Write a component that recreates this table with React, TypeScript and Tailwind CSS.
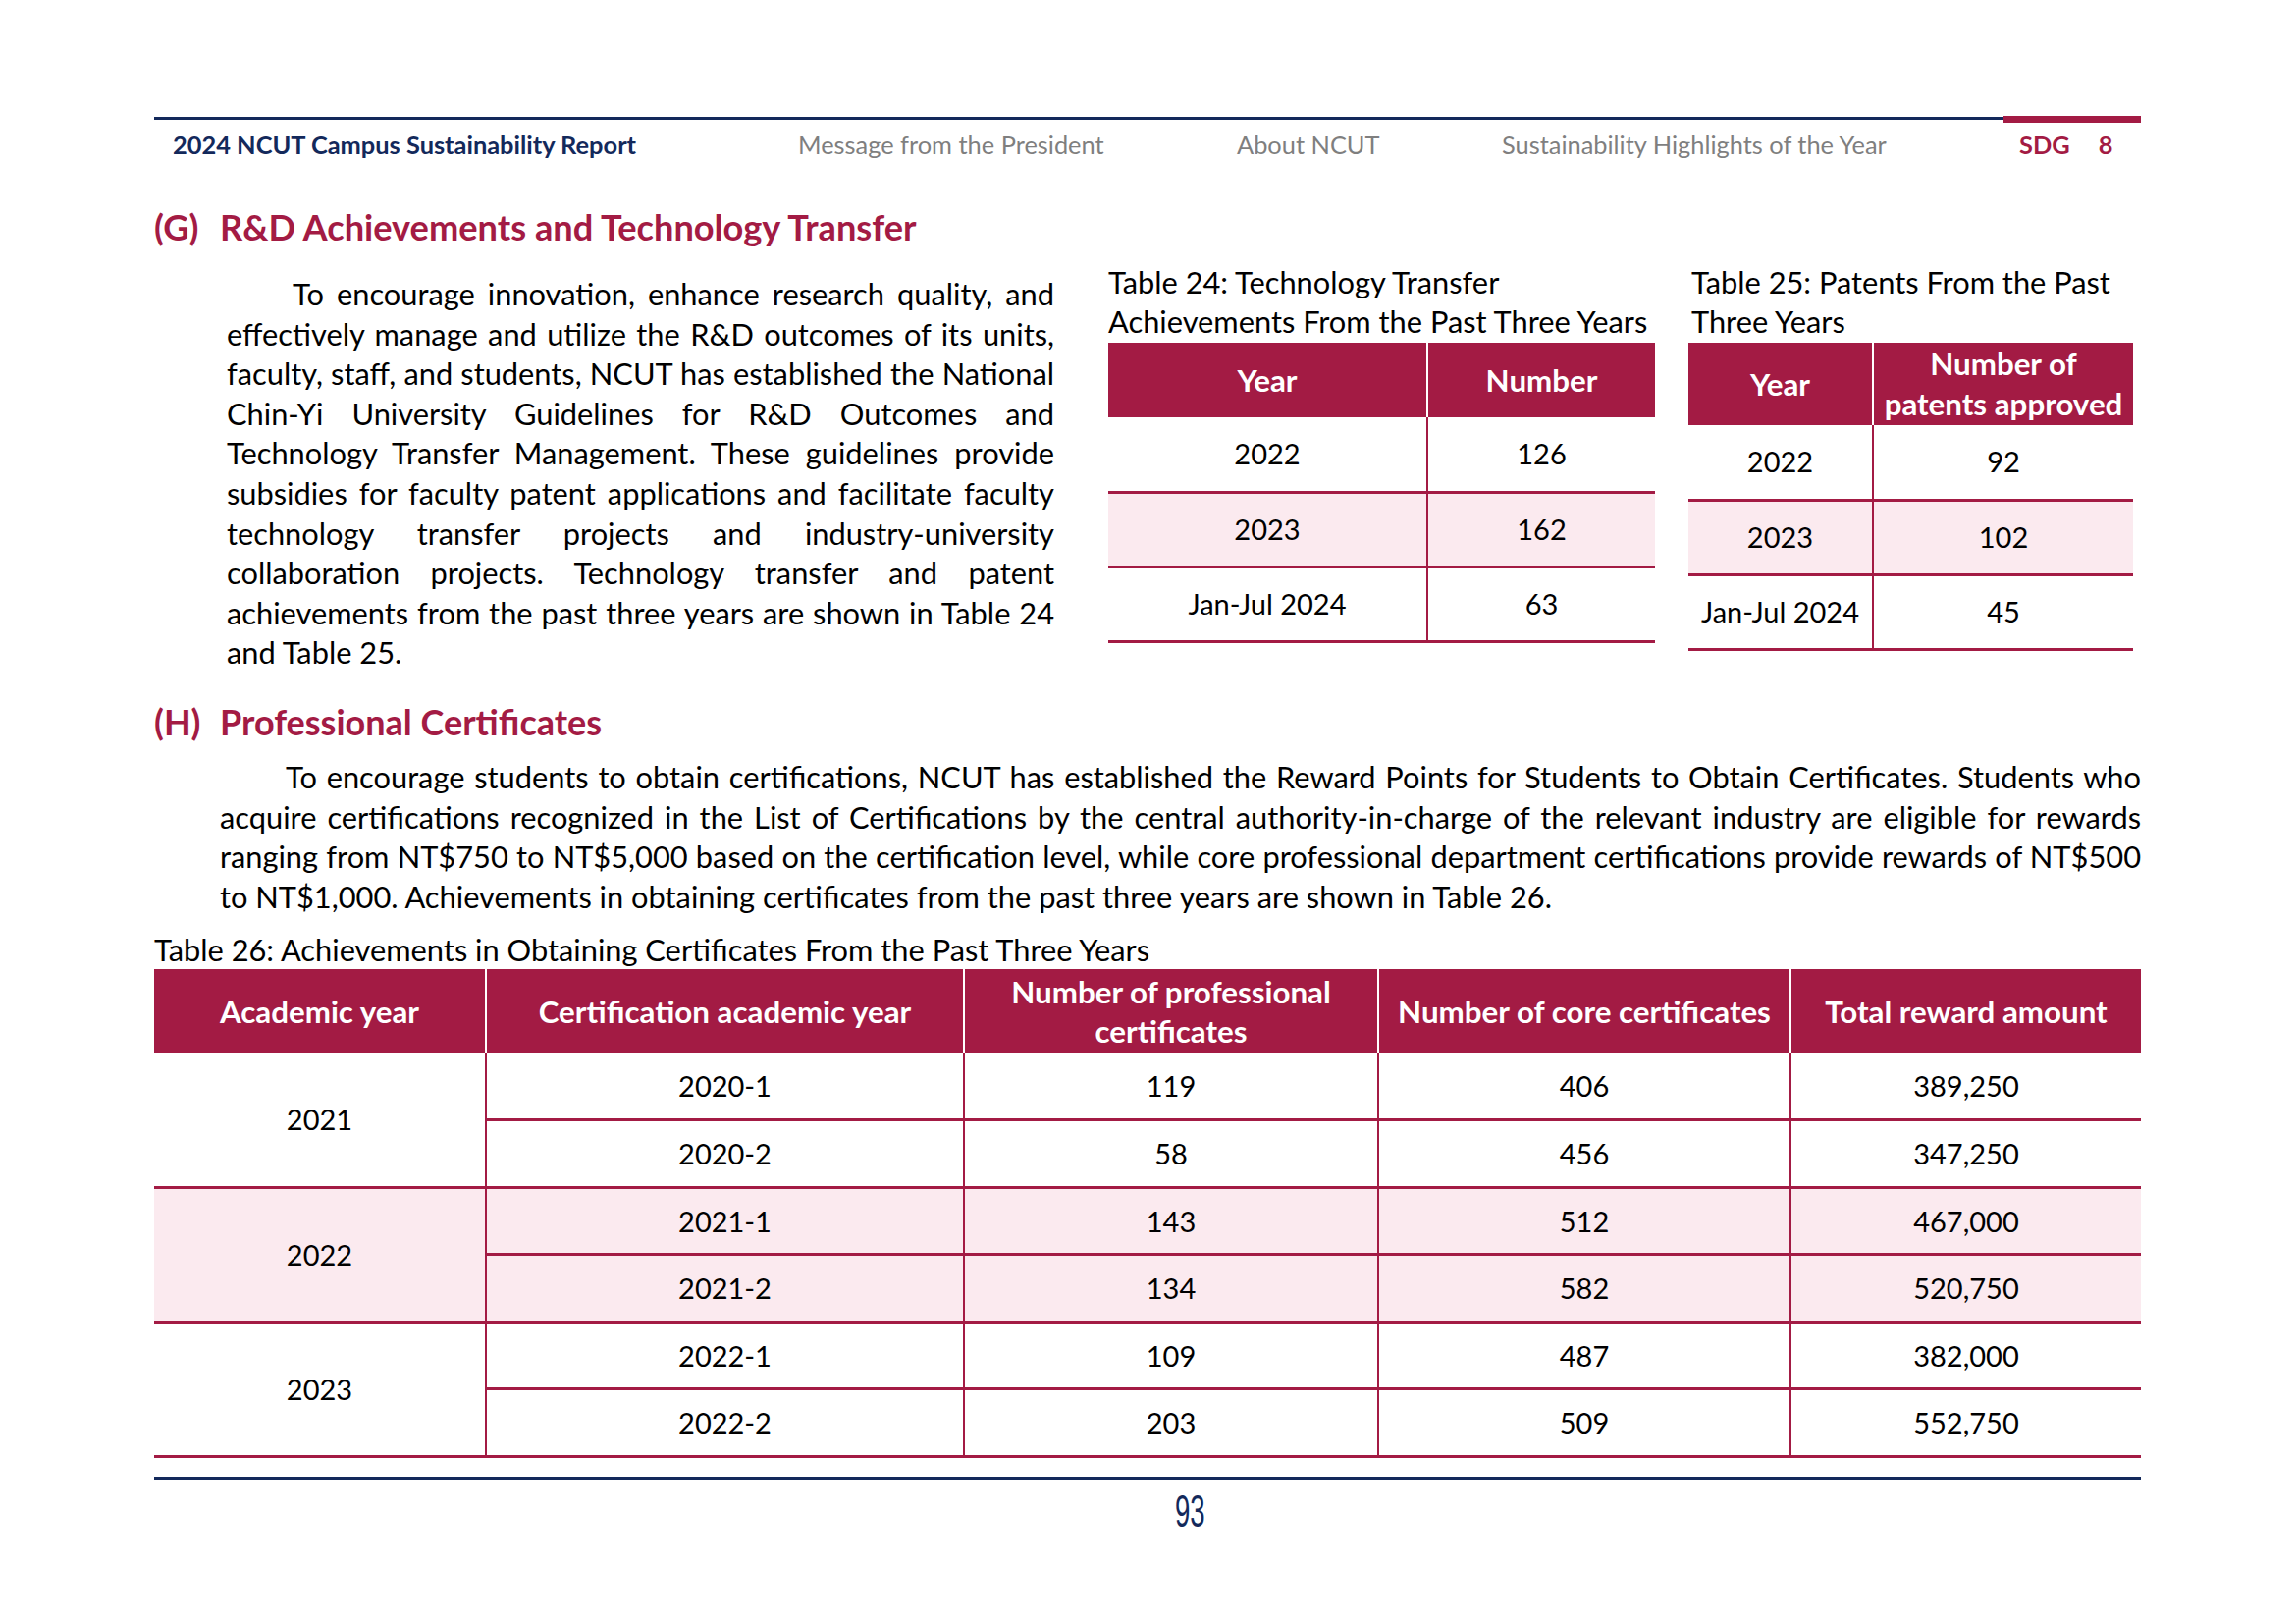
const gParagraph = [
  "To encourage innovation, enhance research quality, and",
  "effectively manage and utilize the R&D outcomes of its units,",
  "faculty, staff, and students, NCUT has established the National",
  "Chin-Yi University Guidelines for R&D Outcomes and",
  "Technology Transfer Management. These guidelines provide",
  "subsidies for faculty patent applications and facilitate faculty",
  "technology transfer projects and industry-university",
  "collaboration projects. Technology transfer and patent",
  "achievements from the past three years are shown in Table 24",
];

const hParagraph = [
  "To encourage students to obtain certifications, NCUT has established the Reward Points for Students to Obtain Certificates. Students who",
  "acquire certifications recognized in the List of Certifications by the central authority-in-charge of the relevant industry are eligible for rewards",
  "ranging from NT$750 to NT$5,000 based on the certification level, while core professional department certifications provide rewards of NT$500",
];

const transfers = [
  { year: "2022", value: "126" },
  { year: "2023", value: "162" },
  { year: "Jan-Jul 2024", value: "63" },
];

const patents = [
  { year: "2022", value: "92" },
  { year: "2023", value: "102" },
  { year: "Jan-Jul 2024", value: "45" },
];

const certificates = [
  {
    year: "2021",
    rows: [
      ["2020-1", "119", "406", "389,250"],
      ["2020-2", "58", "456", "347,250"],
    ],
  },
  {
    year: "2022",
    rows: [
      ["2021-1", "143", "512", "467,000"],
      ["2021-2", "134", "582", "520,750"],
    ],
  },
  {
    year: "2023",
    rows: [
      ["2022-1", "109", "487", "382,000"],
      ["2022-2", "203", "509", "552,750"],
    ],
  },
];

const Header = () => (
  <div className="flex h-[61px]">
    <div className="mt-[1px] flex flex-1 border-t-[3px] border-[#13295b] pt-[9px] text-[25.4px] leading-[32px]">
      <span className="w-[656px] pl-[19px] font-bold text-[#13295b]">
        2024 NCUT Campus Sustainability Report
      </span>
      <span className="w-[447px] text-[#7f7f7f]">Message from the President</span>
      <span className="w-[270px] text-[#7f7f7f]">About NCUT</span>
      <span className="text-[#7f7f7f]">Sustainability Highlights of the Year</span>
    </div>
    <div className="w-[140px] border-t-[7px] border-[#a31b44] pt-[6px] pl-[16px] text-[25.4px] font-bold leading-[32px] text-[#a31b44]">
      SDG<span className="ml-[29px]">8</span>
    </div>
  </div>
);

const SmallTable = ({
  caption,
  width,
  firstCol,
  header,
  headHeight,
  data,
}: {
  caption: React.ReactNode;
  width: string;
  firstCol: string;
  header: React.ReactNode;
  headHeight: string;
  data: { year: string; value: string }[];
}) => (
  <div className={width}>
    <div className="h-[81px] whitespace-nowrap text-[30.8px] leading-[40px]">{caption}</div>
    <table className="w-full table-fixed border-collapse text-center text-[29px] leading-[34px]">
      <colgroup>
        <col className={firstCol} />
        <col />
      </colgroup>
      <thead>
        <tr className={`${headHeight} bg-[#a31b44] text-[31.3px] leading-[41px] text-white`}>
          <th className="border-r-2 border-white font-bold">Year</th>
          <th className="font-bold">{header}</th>
        </tr>
      </thead>
      <tbody>
        {data.map((row, idx) => (
          <tr
            key={row.year}
            className={`h-[76px] border-b-[3px] border-[#a31b44] ${idx === 1 ? "bg-[#fbeaef]" : "bg-white"}`}
          >
            <td className="border-r-2 border-[#a31b44]">{row.year}</td>
            <td>{row.value}</td>
          </tr>
        ))}
      </tbody>
    </table>
  </div>
);

export default function App() {
  return (
    <div className="h-[1654px] w-[2339px] bg-white font-['Lato',sans-serif] text-black">
      <div className="pt-[118px] pr-[158px] pl-[157px]">
        <Header />

        {/* (G) */}
        <h2 className="mt-[30px] flex text-[36.2px] font-bold leading-[44px] text-[#a31b44]">
          <span className="w-[67px]">(G)</span>
          <span>R&amp;D Achievements and Technology Transfer</span>
        </h2>
        <div className="mt-[15px] flex">
          <div className="w-[917px] pt-[12px] pl-[74px] text-[30.8px] leading-[40.6px]">
            {gParagraph.map((line, idx) => (
              <p
                key={idx}
                className={`whitespace-nowrap text-justify [text-align-last:justify] ${idx === 0 ? "indent-[67px]" : ""}`}
              >
                {line}
              </p>
            ))}
            <p>and Table 25.</p>
          </div>
          <div className="ml-[55px] flex gap-[34px]">
            <SmallTable
              caption={
                <>
                  Table 24: Technology Transfer
                  <br />
                  Achievements From the Past Three Years
                </>
              }
              width="w-[557px]"
              firstCol="w-[325px]"
              header="Number"
              headHeight="h-[76px]"
              data={transfers}
            />
            <SmallTable
              caption={
                <div className="pl-[3px]">
                  Table 25: Patents From the Past
                  <br />
                  Three Years
                </div>
              }
              width="w-[453px]"
              firstCol="w-[188px]"
              header={
                <>
                  Number of
                  <br />
                  patents approved
                </>
              }
              headHeight="h-[84px]"
              data={patents}
            />
          </div>
        </div>

        {/* (H) */}
        <h2 className="mt-[27px] flex text-[36px] font-bold leading-[44px] text-[#a31b44]">
          <span className="w-[67px]">(H)</span>
          <span>Professional Certificates</span>
        </h2>
        <div className="mt-[15px] pl-[67px] text-[30.8px] leading-[40.6px]">
          {hParagraph.map((line, idx) => (
            <p
              key={idx}
              className={`whitespace-nowrap text-justify [text-align-last:justify] ${idx === 0 ? "indent-[67px]" : ""}`}
            >
              {line}
            </p>
          ))}
          <p>
            to NT$1,000. Achievements in obtaining certificates from the past three years are shown in Table 26.
          </p>
        </div>

        <div className="mt-[14px] text-[30.8px] leading-[39px]">
          Table 26: Achievements in Obtaining Certificates From the Past Three Years
        </div>
        <table className="w-full table-fixed border-collapse text-center text-[29px] leading-[34px]">
          <colgroup>
            <col className="w-[338px]" />
            <col className="w-[487px]" />
            <col className="w-[422px]" />
            <col className="w-[420px]" />
            <col />
          </colgroup>
          <thead>
            <tr className="h-[85px] bg-[#a31b44] text-[31.3px] leading-[40px] text-white">
              <th className="border-r-2 border-white font-bold">Academic year</th>
              <th className="border-r-2 border-white font-bold">Certification academic year</th>
              <th className="border-r-2 border-white font-bold">
                Number of professional
                <br />
                certificates
              </th>
              <th className="border-r-2 border-white font-bold">Number of core certificates</th>
              <th className="font-bold">Total reward amount</th>
            </tr>
          </thead>
          <tbody>
            {certificates.map((group, gi) =>
              group.rows.map((row, ri) => (
                <tr
                  key={row[0]}
                  className={`h-[68.5px] border-b-[3px] border-[#a31b44] ${gi === 1 ? "bg-[#fbeaef]" : "bg-white"}`}
                >
                  {ri === 0 && (
                    <td rowSpan={2} className="border-r-2 border-[#a31b44]">
                      {group.year}
                    </td>
                  )}
                  <td className="border-r-2 border-[#a31b44]">{row[0]}</td>
                  <td className="border-r-2 border-[#a31b44]">{row[1]}</td>
                  <td className="border-r-2 border-[#a31b44]">{row[2]}</td>
                  <td>{row[3]}</td>
                </tr>
              ))
            )}
          </tbody>
        </table>

        <div className="mt-[19px] border-t-[3px] border-[#13295b]" />
        <div className="mt-[11px] pl-[1040px] text-[46px] leading-[40px] text-[#13295b]">
          <span className="inline-block origin-left scale-x-[0.6] font-['Liberation_Sans_Narrow','Liberation_Sans',sans-serif]">
            93
          </span>
        </div>
      </div>
    </div>
  );
}
